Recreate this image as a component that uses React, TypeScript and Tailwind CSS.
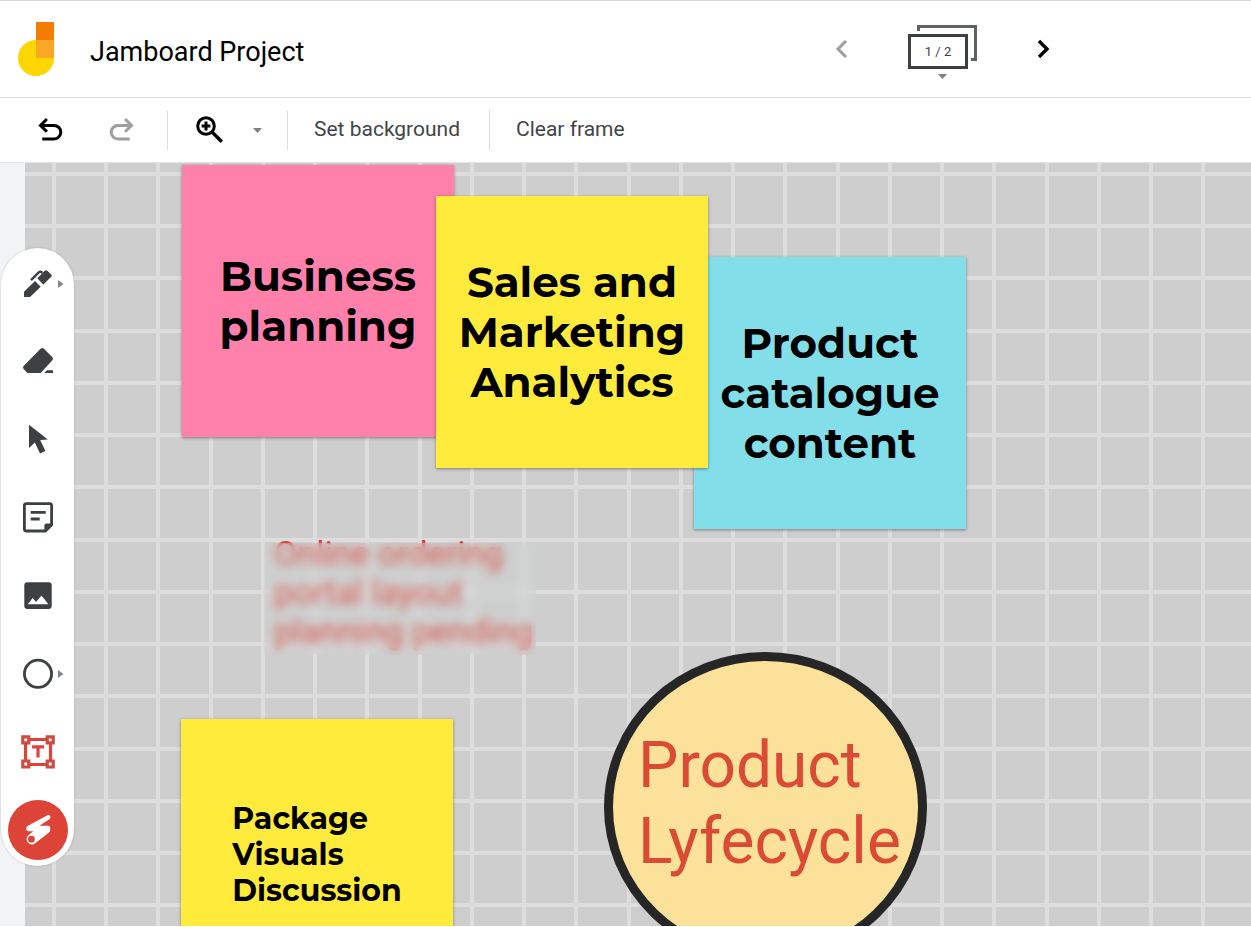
import type { ReactNode } from 'react';

interface Note {
  id: string;
  text: string;
  place: string;
  color: string;
  type: string;
}

const bigText = 'text-[42px] leading-[50px] text-center';
const smallText = 'text-[30px] leading-[36px] text-left';

// Later notes are stacked on top of earlier ones
const notes: Note[] = [
  {
    id: 'business',
    text: 'Business\nplanning',
    place: 'left-[157px] top-[2px]',
    color: 'bg-[#ff80ab]',
    type: bigText,
  },
  {
    id: 'catalogue',
    text: 'Product\ncatalogue\ncontent',
    place: 'left-[669px] top-[94px]',
    color: 'bg-[#82dfea]',
    type: bigText,
  },
  {
    id: 'sales',
    text: 'Sales and\nMarketing\nAnalytics',
    place: 'left-[411px] top-[33px]',
    color: 'bg-[#ffeb3b]',
    type: bigText,
  },
  {
    id: 'package',
    text: 'Package\nVisuals\nDiscussion',
    place: 'left-[156px] top-[556px]',
    color: 'bg-[#ffeb3b]',
    type: smallText,
  },
];

interface Tool {
  name: string;
  icon: ReactNode;
  hasMenu?: boolean;
}

const tools: Tool[] = [
  {
    name: 'Pen',
    hasMenu: true,
    icon: (
      <>
        <path d="M4 31v-5.3L15 15l5.7 5.7L10 31z" fill="currentColor" />
        <path
          d="M17.3 12.3l7.2-7.3q1.5-1.5 3 0l3.8 3.6q1 1.2 0 2.2l-8 7.7z"
          fill="currentColor"
        />
        <path d="M11 14.2l8-8q1.4-1.2 3.4.6" fill="none" stroke="currentColor" strokeWidth="2.4" />
      </>
    ),
  },
  {
    name: 'Erase',
    icon: (
      <>
        <path
          d="M20.6 4.8q1.7-1.6 3.4 0l8.2 8.2q1.6 1.7 0 3.4L20.6 29H7.6l-3.8-3.8q-1.6-1.7 0-3.4z"
          fill="currentColor"
        />
        <path d="M27 26.2h6V29h-8.8z" fill="currentColor" />
      </>
    ),
  },
  {
    name: 'Select',
    icon: (
      <path d="M9 2.8V26l5.9-5.4L20 31.6l5.4-2.5L20.2 18l7.6-.6z" fill="currentColor" />
    ),
  },
  {
    name: 'Sticky note',
    icon: (
      <>
        <path
          d="M6.4 3.6h23.2q2 0 2 2v19.2l-6.2 6.2H6.4q-2 0-2-2V5.6q0-2 2-2z"
          fill="none"
          stroke="currentColor"
          strokeWidth="2.8"
        />
        <path d="M33 23.4h-6.4q-2.2 0-2.2 2.2v6.8z" fill="currentColor" />
        <path d="M10.7 12.4h15M10.7 19h9" stroke="currentColor" strokeWidth="2.8" />
      </>
    ),
  },
  {
    name: 'Add image',
    icon: (
      <>
        <rect x="4.3" y="4.2" width="27.4" height="26.8" rx="3" fill="currentColor" />
        <path d="M7.7 26.3l5-6.3 3.4 4 5.4-6.6 6.9 8.9z" fill="white" />
      </>
    ),
  },
  {
    name: 'Circle',
    hasMenu: true,
    icon: (
      <circle cx="18" cy="17.8" r="13.6" fill="none" stroke="currentColor" strokeWidth="2.8" />
    ),
  },
  {
    name: 'Text box',
    icon: (
      <g fill="none" stroke="#db4437" strokeWidth="3.2">
        <path d="M5.5 5.5h25v25h-25z" />
        <g fill="white" stroke="#cf4a41">
          <path d="M2.8 2.8h6v6h-6zM27.2 2.8h6v6h-6zM2.8 27h6v6h-6zM27.2 27h6v6h-6z" />
        </g>
        <path d="M12 12.8h12M18 12.8v10.6" />
      </g>
    ),
  },
];

function ToolButton({ tool }: { tool: Tool }) {
  return (
    <button
      type="button"
      aria-label={tool.name}
      className="relative flex h-[60px] w-full items-center justify-center text-[#3c4043]"
    >
      <svg className="size-9" viewBox="0 0 36 36" aria-hidden="true">
        {tool.icon}
      </svg>
      {tool.hasMenu && (
        <svg
          className="absolute right-[10px] top-[26px] h-2 w-[6px]"
          viewBox="0 0 6 8"
          aria-hidden="true"
        >
          <path d="M0 0l5.5 4L0 8z" fill="#80868b" />
        </svg>
      )}
    </button>
  );
}

function Caret() {
  return (
    <svg className="h-[5px] w-[9px]" viewBox="0 0 9 5" aria-hidden="true">
      <path d="M0 0h9L4.5 5z" fill="#808080" />
    </svg>
  );
}

function Header() {
  return (
    <header className="flex h-[98px] shrink-0 items-center border-y border-[#dadce0] pr-[188px]">
      <svg className="ml-[18px] h-14 w-9" viewBox="0 0 36 56" aria-hidden="true">
        <path d="M18 19h18v18a18 18 0 1 1-18-18z" fill="#fdd500" />
        <path d="M18 1h18v18H18z" fill="#f57c00" />
        <path d="M18 19h18v18H18z" fill="#f9a825" />
      </svg>
      <h1 className="ml-9 pt-[6px] text-[27px] leading-8 text-black">Jamboard Project</h1>

      <nav className="ml-auto flex items-center gap-[46px]" aria-label="Frames">
        <button
          type="button"
          aria-label="Previous frame"
          className="flex size-10 items-center justify-center text-[#9e9e9e]"
        >
          <svg className="size-6" viewBox="0 0 24 24" fill="none" stroke="currentColor" strokeWidth="3" aria-hidden="true">
            <path d="M16 4l-8 8 8 8" />
          </svg>
        </button>
        <button
          type="button"
          aria-label="Show frame bar"
          className="relative mt-[6px] flex h-[54px] w-[69px] flex-col pt-[9px]"
        >
          <svg className="absolute inset-x-0 top-0 h-9 w-[69px]" viewBox="0 0 69 36" aria-hidden="true">
            <path d="M10.5 6V1.5h57v33H63" fill="none" stroke="#5f6368" strokeWidth="3" />
          </svg>
          <span className="flex h-9 w-[60px] items-center justify-center border-3 border-[#3c4043] text-[13px] leading-4 text-[#3c4043]">
            1 / 2
          </span>
          <span className="ml-[30px] mt-[5px]">
            <Caret />
          </span>
        </button>
        <button
          type="button"
          aria-label="Next frame"
          className="flex size-10 items-center justify-center text-black"
        >
          <svg className="size-6" viewBox="0 0 24 24" fill="none" stroke="currentColor" strokeWidth="3.4" aria-hidden="true">
            <path d="M8 4l8 8-8 8" />
          </svg>
        </button>
      </nav>
    </header>
  );
}

function Divider() {
  return <div className="h-10 w-px bg-[#dadce0]" />;
}

function Toolbar() {
  const arrow = 'M10.3 27H22a6.8 6.8 0 0 0 0-13.6H8.8M14.9 7l-6.4 6.4 6.4 6.4';

  return (
    <div
      role="toolbar"
      className="flex h-[65px] shrink-0 items-center border-b border-[#e3e5e8] pl-[26px] text-[21px] text-[#424548]"
    >
      <button type="button" aria-label="Undo" className="flex size-12 items-center justify-center text-black">
        <svg className="size-9" viewBox="0 0 36 36" fill="none" stroke="currentColor" strokeWidth="3" aria-hidden="true">
          <path d={arrow} />
        </svg>
      </button>
      <button
        type="button"
        aria-label="Redo"
        className="ml-6 mr-[21px] flex size-12 items-center justify-center text-[#9e9e9e]"
      >
        <svg className="size-9 -scale-x-100" viewBox="0 0 36 36" fill="none" stroke="currentColor" strokeWidth="3" aria-hidden="true">
          <path d={arrow} />
        </svg>
      </button>
      <Divider />
      <button type="button" aria-label="Zoom in" className="ml-[17px] flex size-12 items-center justify-center text-black">
        <svg className="size-9" viewBox="0 0 36 36" fill="none" stroke="currentColor" strokeWidth="3" aria-hidden="true">
          <circle cx="15" cy="14" r="8.3" />
          <path d="M21 20l9.8 9.8" strokeWidth="3.4" />
          <path d="M10.6 14h8.8M15 9.6v8.8" />
        </svg>
      </button>
      <button
        type="button"
        aria-label="Zoom options"
        className="ml-3 mr-[18px] flex h-12 w-6 items-center justify-center"
      >
        <Caret />
      </button>
      <Divider />
      <button type="button" className="h-12 pl-[26px] pr-[29px]">
        Set background
      </button>
      <Divider />
      <button type="button" className="h-12 pl-[26px] pr-[29px]">
        Clear frame
      </button>
    </div>
  );
}

function ToolPalette() {
  return (
    <aside
      aria-label="Tools"
      className="absolute left-px top-[85px] flex w-[73px] flex-col items-center gap-[18px] rounded-full bg-white py-[6px] shadow-[0_0_2px_rgba(60,64,67,0.3)]"
    >
      {tools.map((tool) => (
        <ToolButton key={tool.name} tool={tool} />
      ))}
      <button type="button" aria-label="Laser" className="size-[60px] rounded-full bg-[#db4437]">
        <svg className="size-[60px]" viewBox="0 0 60 60" aria-hidden="true">
          <path
            d="M39.4 15.2q2.6-.8 3 1.4.4 2-1.4 3l-9.6 6.2h8.8q2 .2 2 2v2.6q0 1.2-1.2 2L27.2 43.2q-3.6 2.6-7.2-.4-3-4 .4-7.6l5-4h-4.8q-2.6-.4-2.4-3 .2-1.4 1.8-2.4z"
            fill="white"
          />
          <circle cx="23.4" cy="39.2" r="3.4" fill="#db4437" />
        </svg>
      </button>
    </aside>
  );
}

function Grid() {
  return (
    <svg className="absolute inset-0 size-full" aria-hidden="true">
      <defs>
        <pattern id="grid" x="27" y="9" width="209" height="209" patternUnits="userSpaceOnUse">
          <path
            d="M0 0h4v209H0zM52 0h4v209h-4zM104 0h4v209h-4zM157 0h4v209h-4zM0 0h209v4H0zM0 52h209v4H0zM0 104h209v4H0zM0 157h209v4H0z"
            fill="#dddddd"
          />
        </pattern>
      </defs>
      <rect width="100%" height="100%" fill="url(#grid)" />
    </svg>
  );
}

function Canvas() {
  return (
    <section aria-label="Frame" className="relative flex-1 overflow-hidden bg-[#cecece]">
      <Grid />

      {notes.map((note) => (
        <article
          key={note.id}
          className={`absolute flex size-[272px] items-center justify-center shadow-[0_1px_3px_rgba(0,0,0,0.4)] ${note.place} ${note.color}`}
        >
          <p className={`whitespace-pre font-[Montserrat,Inter,sans-serif] font-bold text-black ${note.type}`}>
            {note.text}
          </p>
        </article>
      ))}

      <p className="absolute left-[249px] top-[371px] whitespace-pre text-[34px] leading-[39px] text-[#db4437]">
        {'Online ordering\nportal layout\nplanning pending'}
      </p>
      <div className="absolute left-[239px] top-[380px] h-[112px] w-[272px] bg-[#cfd1d1]/20 backdrop-blur-[5px]" />

      <div className="absolute left-[579px] top-[489px] h-[310px] w-[323px]">
        <svg className="absolute inset-0 size-full" viewBox="0 0 323 310" aria-hidden="true">
          <ellipse cx="161.5" cy="155" rx="157" ry="150.5" fill="#fce19b" stroke="#262626" strokeWidth="9" />
        </svg>
        <p className="relative whitespace-pre pl-[34px] pt-[76px] text-[64px] leading-[76px] text-[#db4a34]">
          {'Product\nLyfecycle'}
        </p>
      </div>
    </section>
  );
}

export default function App() {
  return (
    <div className="flex h-screen flex-col bg-white pb-px font-[Roboto,'Liberation_Sans',sans-serif]">
      <Header />
      <Toolbar />
      <main className="relative flex min-h-0 flex-1">
        <div className="w-[25px] shrink-0 bg-[#f1f3f5]" />
        <Canvas />
        <ToolPalette />
      </main>
    </div>
  );
}
